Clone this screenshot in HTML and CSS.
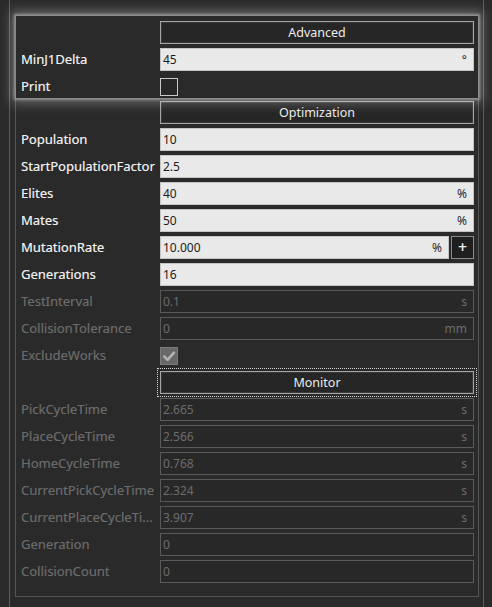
FILE: index.html
```html
<!DOCTYPE html>
<html lang="en">
<head>
<meta charset="utf-8">
<title>Properties</title>
<link rel="stylesheet" href="styles.css">
</head>
<body>
<div class="frame">
  <div class="panel">
    <div class="advanced grid">
      <div></div>
      <div class="header">Advanced</div>
      <div class="label">MinJ1Delta</div>
      <div class="field"><span class="val">45</span><span class="unit">°</span></div>
      <div class="label">Print</div>
      <div class="checkcell"><span class="check"></span></div>
    </div>
    <div class="rest grid">
      <div></div>
      <div class="header">Optimization</div>
      <div class="label">Population</div>
      <div class="field"><span class="val">10</span></div>
      <div class="label">StartPopulationFactor</div>
      <div class="field"><span class="val">2.5</span></div>
      <div class="label">Elites</div>
      <div class="field"><span class="val">40</span><span class="unit">%</span></div>
      <div class="label">Mates</div>
      <div class="field"><span class="val">50</span><span class="unit">%</span></div>
      <div class="label">MutationRate</div>
      <div class="fieldgroup">
        <div class="field"><span class="val">10.000</span><span class="unit">%</span></div>
        <button class="plus" type="button">+</button>
      </div>
      <div class="label">Generations</div>
      <div class="field"><span class="val">16</span></div>
      <div class="label off">TestInterval</div>
      <div class="field off"><span class="val">0.1</span><span class="unit">s</span></div>
      <div class="label off">CollisionTolerance</div>
      <div class="field off"><span class="val">0</span><span class="unit">mm</span></div>
      <div class="label off">ExcludeWorks</div>
      <div class="checkcell"><span class="check checked">
        <svg viewBox="0 0 18 18" width="18" height="18"><path d="M4.2 9.4 L7.6 12.8 L14 5.6" fill="none" stroke="#b4b4b4" stroke-width="2.6" stroke-linecap="round" stroke-linejoin="round"/></svg>
      </span></div>
      <div></div>
      <div class="header focus">Monitor</div>
      <div class="label off">PickCycleTime</div>
      <div class="field off"><span class="val">2.665</span><span class="unit">s</span></div>
      <div class="label off">PlaceCycleTime</div>
      <div class="field off"><span class="val">2.566</span><span class="unit">s</span></div>
      <div class="label off">HomeCycleTime</div>
      <div class="field off"><span class="val">0.768</span><span class="unit">s</span></div>
      <div class="label off">CurrentPickCycleTime</div>
      <div class="field off"><span class="val">2.324</span><span class="unit">s</span></div>
      <div class="label off" title="CurrentPlaceCycleTime">CurrentPlaceCycleTi...</div>
      <div class="field off"><span class="val">3.907</span><span class="unit">s</span></div>
      <div class="label off">Generation</div>
      <div class="field off"><span class="val">0</span></div>
      <div class="label off">CollisionCount</div>
      <div class="field off"><span class="val">0</span></div>
    </div>
  </div>
</div>
</body>
</html>
```

FILE: styles.css
```css
* { box-sizing: border-box; }

html, body {
  margin: 0;
  padding: 0;
  background: #2a2a2a;
  width: 492px;
  height: 607px;
  overflow: hidden;
  font-family: "Noto Sans", "Open Sans", sans-serif;
}

.frame {
  margin-left: 9px;
  width: 475px;
  height: 607px;
  border-left: 1px solid #5c5c5c;
  border-right: 1px solid #5c5c5c;
  padding: 15px 0 0 5px;
}

.panel {
  width: 464px;
  border: 1px solid #555555;
  border-top: none;
}

.grid {
  display: grid;
  grid-template-columns: 137px 1fr;
  column-gap: 2px;
  grid-auto-rows: 23px;
  row-gap: 4px;
  padding-left: 5px;
  padding-right: 4px;
}

.advanced {
  position: relative;
  z-index: 1;
  margin: 0 -1px;
  padding: 5px 4px 0 5px;
  border: 1px solid #8c8c8c;
  background: #2a2a2a;
  box-shadow: 0 0 11px 4px rgba(255, 255, 255, 0.30), 0 0 2px 1px rgba(255, 255, 255, 0.35);
}

.rest {
  padding-top: 2px;
  padding-bottom: 13px;
}

.label {
  display: block;
  line-height: 23px;
  font-size: 13px;
  color: #f0f0f0;
  white-space: nowrap;
  overflow: hidden;
  min-width: 0;
  text-shadow: 0.3px 0 0 rgba(240, 240, 240, 0.5);
}

.label.off {
  color: #6a6a6a;
  text-shadow: 0.3px 0 0 rgba(106, 106, 106, 0.5);
}

.header {
  grid-column: 2;
  display: flex;
  align-items: center;
  justify-content: center;
  border: 1px solid #a4a4a4;
  box-shadow: inset 0 0 0 1px #3a3a3a;
  background: #262626;
  color: #ececec;
  font-size: 12.5px;
}

.header.focus {
  outline: 1px dotted #d8d8d8;
  outline-offset: 2px;
}

.field {
  display: flex;
  align-items: center;
  justify-content: space-between;
  background: #e9e9e9;
  border: 1px solid #c4c4c4;
  padding: 0 6px 0 2px;
  font-size: 12px;
  color: #1c1c1c;
  min-width: 0;
  flex: 1;
}

.field .unit { color: #2a2a2a; font-size: 12px; }

.field.off {
  background: #282828;
  border: 1px solid #5a5a5a;
  color: #6c6c6c;
}

.field.off .unit { color: #6c6c6c; }

.fieldgroup {
  display: flex;
  gap: 2px;
}

.plus {
  width: 23px;
  height: 23px;
  padding: 0;
  margin: 0;
  border: 1px solid #8a8a8a;
  background: #1f1f1f;
  color: #f2f2f2;
  font-family: "DejaVu Sans", sans-serif;
  font-size: 12px;
  font-weight: bold;
  line-height: 21px;
}

.checkcell {
  display: flex;
  align-items: center;
}

.check {
  display: block;
  width: 18px;
  height: 18px;
  border: 1px solid #c8c8c8;
  background: #282828;
}

.check.checked {
  border-color: #7a7a7a;
  background: #686868;
}

.check.checked svg {
  display: block;
  margin: -1px 0 0 -1px;
}
```
